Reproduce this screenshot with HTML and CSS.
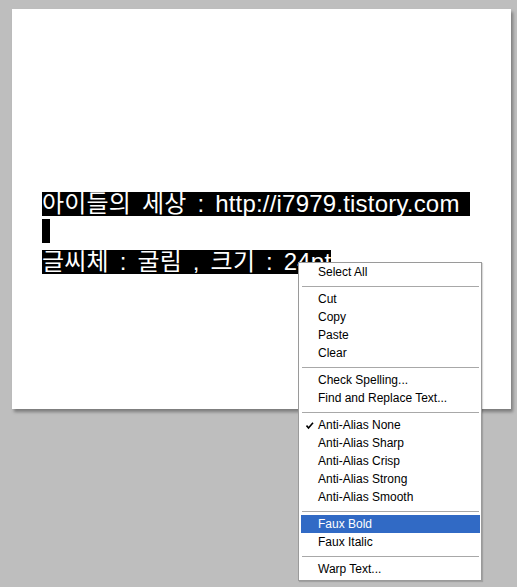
FILE: index.html
```html
<!DOCTYPE html>
<html lang="ko">
<head>
    <meta charset="UTF-8">
    <title>Type Tool Context Menu</title>
    <link rel="stylesheet" href="styles.css">
</head>
<body>
    <div class="workspace">
        <div class="canvas">
            <div class="text-layer">
                <div class="line"><span class="sel">아이들의 세상 : http://i7979.tistory.com </span></div>
                <div class="line"><span class="sel blank"></span></div>
                <div class="line"><span class="sel">글씨체 : 굴림 , 크기 : 24pt</span></div>
            </div>
        </div>

        <ul class="context-menu">
            <li class="item">Select All</li>
            <li class="sep"></li>
            <li class="item">Cut</li>
            <li class="item">Copy</li>
            <li class="item">Paste</li>
            <li class="item">Clear</li>
            <li class="sep"></li>
            <li class="item">Check Spelling...</li>
            <li class="item">Find and Replace Text...</li>
            <li class="sep"></li>
            <li class="item checked">
                <svg class="check" width="8" height="8" viewBox="0 0 8 8"><path d="M0.5 3.5 L2.5 6 L7 0.8" fill="none" stroke="#000" stroke-width="1.6"/></svg>
                Anti-Alias None
            </li>
            <li class="item">Anti-Alias Sharp</li>
            <li class="item">Anti-Alias Crisp</li>
            <li class="item">Anti-Alias Strong</li>
            <li class="item">Anti-Alias Smooth</li>
            <li class="sep"></li>
            <li class="item active">Faux Bold</li>
            <li class="item">Faux Italic</li>
            <li class="sep"></li>
            <li class="item">Warp Text...</li>
        </ul>
    </div>
</body>
</html>
```

FILE: styles.css
```css
* {
    margin: 0;
    padding: 0;
    box-sizing: border-box;
}

body {
    background-color: #bebebe;
    width: 517px;
    height: 587px;
    overflow: hidden;
}

.workspace {
    position: relative;
    height: 100%;
    padding: 9px 0 0 12px;
}

.canvas {
    width: 499px;
    height: 400px;
    background: #fff;
    box-shadow: 2px 3px 3px rgba(0, 0, 0, 0.35);
    padding: 181px 0 0 30px;
}

.text-layer {
    font-family: "Liberation Sans", "Noto Sans CJK KR", sans-serif;
    font-size: 24px;
    letter-spacing: 0.2px;
    word-spacing: 4px;
}

.line {
    height: 29px;
}

.sel {
    display: inline-block;
    height: 24px;
    line-height: 24px;
    background: #000;
    color: #fff;
    white-space: pre;
}

.sel.blank {
    width: 8px;
}

/* context menu */
.context-menu {
    position: absolute;
    left: 298px;
    top: 262px;
    width: 184px;
    height: 319px;
    list-style: none;
    background: #fff;
    border: 1px solid #9a9a9a;
    box-shadow: 1px 1px 1px rgba(0, 0, 0, 0.15);
    padding: 0 1px 1px 2px;
    font-family: "Liberation Sans", sans-serif;
    font-size: 12px;
    color: #000;
}

.item {
    position: relative;
    height: 18px;
    line-height: 18px;
    padding-left: 17px;
    white-space: nowrap;
}

.item.active {
    background: #316ac5;
    color: #fff;
}

.check {
    position: absolute;
    left: 5px;
    top: 6px;
}

.sep {
    height: 9px;
    padding-top: 5px;
    margin: 0 1px 0 1px;
}

.sep::before {
    content: "";
    display: block;
    border-top: 1px solid #a8a8a8;
}
```
